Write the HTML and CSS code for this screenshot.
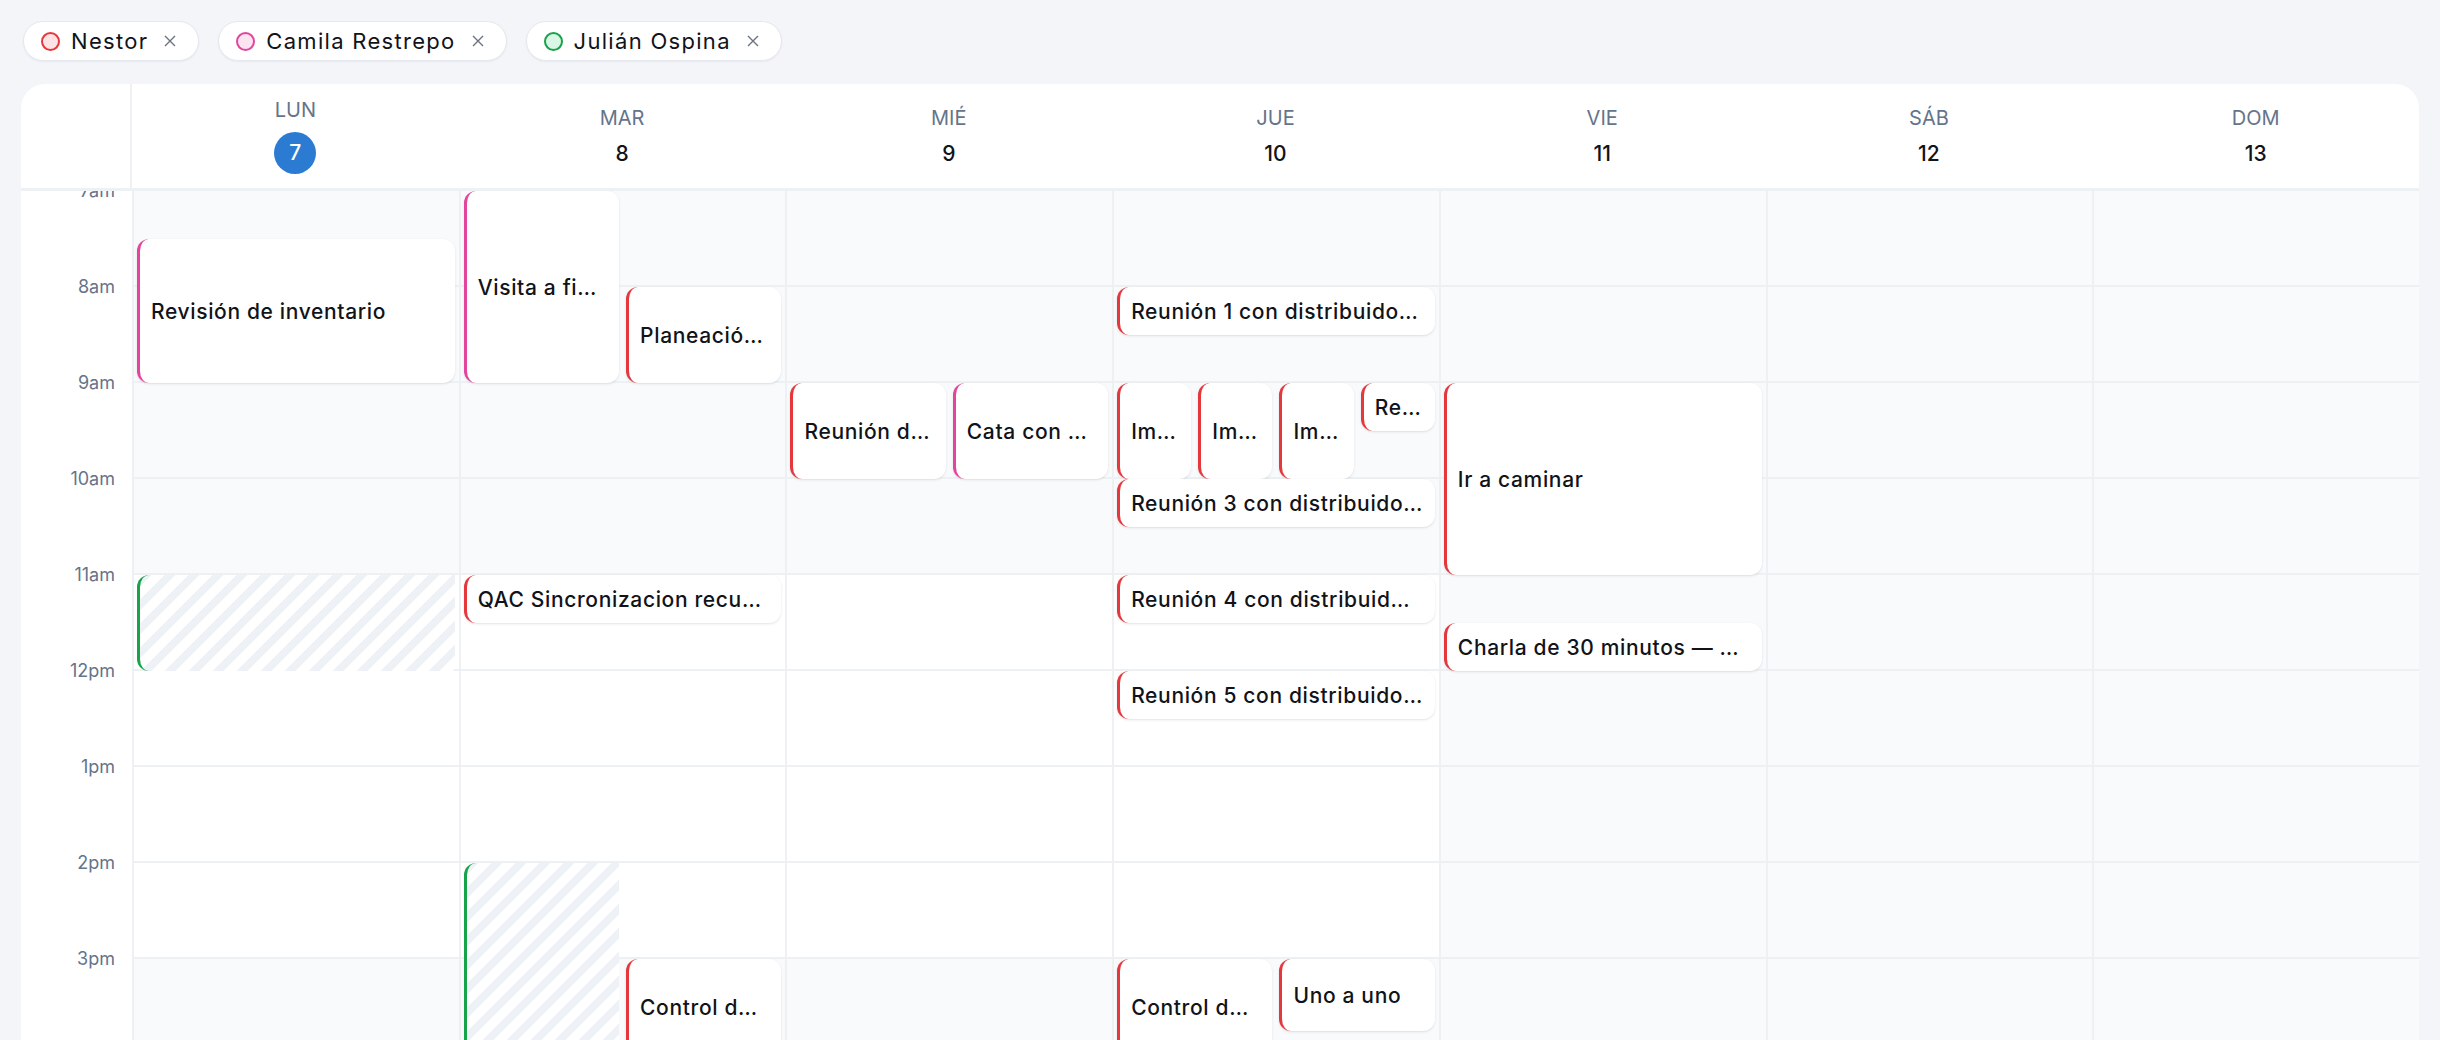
FILE: index.html
```html
<!DOCTYPE html>
<html lang="es">
<head>
    <meta charset="UTF-8">
    <meta name="viewport" content="width=device-width, initial-scale=1.0">
    <title>Calendario semanal</title>
    <link rel="stylesheet" href="styles.css">
</head>
<body>
<div class="page">

    <!-- People whose agendas are overlaid -->
    <div class="chips">
        <span class="chip">
            <span class="dot red"></span>
            <span class="chip-name">Nestor</span>
            <svg class="chip-x" viewBox="0 0 14 14"><path d="M2 2L12 12M12 2L2 12"/></svg>
        </span>
        <span class="chip">
            <span class="dot pink"></span>
            <span class="chip-name">Camila Restrepo</span>
            <svg class="chip-x" viewBox="0 0 14 14"><path d="M2 2L12 12M12 2L2 12"/></svg>
        </span>
        <span class="chip">
            <span class="dot green"></span>
            <span class="chip-name">Julián Ospina</span>
            <svg class="chip-x" viewBox="0 0 14 14"><path d="M2 2L12 12M12 2L2 12"/></svg>
        </span>
    </div>

    <div class="calendar">
        <div class="cal-head">
            <div class="corner"></div>
            <div class="day-head today"><span class="wd">LUN</span><span class="num">7</span></div>
            <div class="day-head"><span class="wd">MAR</span><span class="num">8</span></div>
            <div class="day-head"><span class="wd">MIÉ</span><span class="num">9</span></div>
            <div class="day-head"><span class="wd">JUE</span><span class="num">10</span></div>
            <div class="day-head"><span class="wd">VIE</span><span class="num">11</span></div>
            <div class="day-head"><span class="wd">SÁB</span><span class="num">12</span></div>
            <div class="day-head"><span class="wd">DOM</span><span class="num">13</span></div>
        </div>

        <div class="cal-body">
            <div class="gutter">
                <div class="hour"><span>7am</span></div>
                <div class="hour"><span>8am</span></div>
                <div class="hour"><span>9am</span></div>
                <div class="hour"><span>10am</span></div>
                <div class="hour"><span>11am</span></div>
                <div class="hour"><span>12pm</span></div>
                <div class="hour"><span>1pm</span></div>
                <div class="hour"><span>2pm</span></div>
                <div class="hour"><span>3pm</span></div>
            </div>

            <!-- Lunes -->
            <div class="day">
                <div class="slot"></div><div class="slot"></div><div class="slot"></div><div class="slot"></div>
                <div class="slot open"></div><div class="slot open"></div><div class="slot open"></div><div class="slot open"></div>
                <div class="slot"></div>
                <div class="event pink" style="--start:0.5;--len:1.5;--lane:0;--lanes:1"><span>Revisión de inventario</span></div>
                <div class="busy" style="--start:4;--len:1;--lane:0;--lanes:1"></div>
            </div>

            <!-- Martes -->
            <div class="day">
                <div class="slot"></div><div class="slot"></div><div class="slot"></div><div class="slot"></div>
                <div class="slot open"></div><div class="slot open"></div><div class="slot open"></div><div class="slot open"></div>
                <div class="slot"></div>
                <div class="event pink" style="--start:0;--len:2;--lane:0;--lanes:2"><span>Visita a finca</span></div>
                <div class="event red" style="--start:1;--len:1;--lane:1;--lanes:2"><span>Planeación semanal</span></div>
                <div class="event red" style="--start:4;--len:0.5;--lane:0;--lanes:1"><span>QAC Sincronizacion recurrente</span></div>
                <div class="busy" style="--start:7;--len:2;--lane:0;--lanes:2"></div>
                <div class="event red" style="--start:8;--len:1;--lane:1;--lanes:2"><span>Control de calidad</span></div>
            </div>

            <!-- Miércoles -->
            <div class="day">
                <div class="slot"></div><div class="slot"></div><div class="slot"></div><div class="slot"></div>
                <div class="slot open"></div><div class="slot open"></div><div class="slot open"></div><div class="slot open"></div>
                <div class="slot"></div>
                <div class="event red" style="--start:2;--len:1;--lane:0;--lanes:2"><span>Reunión de equipo</span></div>
                <div class="event pink" style="--start:2;--len:1;--lane:1;--lanes:2"><span>Cata con clientes</span></div>
            </div>

            <!-- Jueves -->
            <div class="day">
                <div class="slot"></div><div class="slot"></div><div class="slot"></div><div class="slot"></div>
                <div class="slot open"></div><div class="slot open"></div><div class="slot open"></div><div class="slot open"></div>
                <div class="slot"></div>
                <div class="event red" style="--start:1;--len:0.5;--lane:0;--lanes:1"><span>Reunión 1 con distribuidores</span></div>
                <div class="event red" style="--start:2;--len:1;--lane:0;--lanes:4"><span>Importación</span></div>
                <div class="event red" style="--start:2;--len:1;--lane:1;--lanes:4"><span>Importación</span></div>
                <div class="event red" style="--start:2;--len:1;--lane:2;--lanes:4"><span>Importación</span></div>
                <div class="event red" style="--start:2;--len:0.5;--lane:3;--lanes:4"><span>Reunión 2</span></div>
                <div class="event red" style="--start:3;--len:0.5;--lane:0;--lanes:1"><span>Reunión 3 con distribuidores</span></div>
                <div class="event red" style="--start:4;--len:0.5;--lane:0;--lanes:1"><span>Reunión 4 con distribuidores</span></div>
                <div class="event red" style="--start:5;--len:0.5;--lane:0;--lanes:1"><span>Reunión 5 con distribuidores</span></div>
                <div class="event red" style="--start:8;--len:1;--lane:0;--lanes:2"><span>Control de calidad</span></div>
                <div class="event red" style="--start:8;--len:0.75;--lane:1;--lanes:2"><span>Uno a uno</span></div>
            </div>

            <!-- Viernes -->
            <div class="day">
                <div class="slot"></div><div class="slot"></div><div class="slot"></div><div class="slot"></div>
                <div class="slot"></div><div class="slot"></div><div class="slot"></div><div class="slot"></div>
                <div class="slot"></div>
                <div class="event red" style="--start:2;--len:2;--lane:0;--lanes:1"><span>Ir a caminar</span></div>
                <div class="event red" style="--start:4.5;--len:0.5;--lane:0;--lanes:1"><span>Charla de 30 minutos — Equipo</span></div>
            </div>

            <!-- Sábado -->
            <div class="day">
                <div class="slot"></div><div class="slot"></div><div class="slot"></div><div class="slot"></div>
                <div class="slot"></div><div class="slot"></div><div class="slot"></div><div class="slot"></div>
                <div class="slot"></div>
            </div>

            <!-- Domingo -->
            <div class="day">
                <div class="slot"></div><div class="slot"></div><div class="slot"></div><div class="slot"></div>
                <div class="slot"></div><div class="slot"></div><div class="slot"></div><div class="slot"></div>
                <div class="slot"></div>
            </div>
        </div>
    </div>
</div>
</body>
</html>
```

FILE: styles.css
```css
:root {
    --hour: 96px;
    --line: #eef1f4;
    --muted: #64748b;
    --ink: #111318;
    --red: #e5383d;
    --pink: #e3459d;
    --green: #16a34a;
}

html,
body {
    height: 100%;
    overflow: hidden;
}

body {
    margin: 0;
    background-color: #f4f5f8;
    font-family: "Inter", "Noto Sans", sans-serif;
    color: var(--ink);
}

.page {
    padding: 21px 21px 0 21px;
}

/* Person filter chips */
.chips {
    display: flex;
    gap: 19px;
    padding-left: 2px;
    margin-bottom: 23px;
}

.chip {
    display: inline-flex;
    align-items: center;
    height: 40px;
    box-sizing: border-box;
    padding: 0 21px 0 17px;
    background-color: #ffffff;
    border: 1px solid #e5e8ee;
    border-radius: 20px;
    box-shadow: 0 1px 2px rgba(15, 23, 42, 0.05);
}

.dot {
    width: 19px;
    height: 19px;
    box-sizing: border-box;
    border-radius: 50%;
    border: 2px solid;
    margin-right: 11px;
}

.dot.red { border-color: var(--red); background-color: #fde3e4; }
.dot.pink { border-color: var(--pink); background-color: #fce4f1; }
.dot.green { border-color: var(--green); background-color: #dcf6e5; }

.chip-name {
    font-size: 22px;
    letter-spacing: 1.3px;
}

.chip-x {
    width: 14px;
    height: 14px;
    margin-left: 15px;
    fill: none;
    stroke: #6b7280;
    stroke-width: 1.4;
}

/* Week grid */
.calendar {
    background-color: #ffffff;
    border-radius: 24px 24px 0 0;
    overflow: hidden;
}

.cal-head {
    display: grid;
    grid-template-columns: 111px repeat(7, 1fr);
    height: 104px;
    border-bottom: 3px solid var(--line);
}

.corner {
    border-right: 2px solid var(--line);
}

.day-head {
    display: flex;
    flex-direction: column;
    align-items: center;
    justify-content: center;
    gap: 10px;
}

.wd {
    font-size: 20px;
    line-height: 24px;
    color: var(--muted);
}

.num {
    font-size: 21px;
    font-weight: 500;
    line-height: 27px;
}

.today .num {
    width: 42px;
    height: 42px;
    line-height: 42px;
    text-align: center;
    border-radius: 50%;
    background-color: #2b7bd3;
    color: #ffffff;
}

.cal-body {
    display: grid;
    grid-template-columns: 111px repeat(7, 1fr);
    height: 849px;
    overflow: hidden;
}

.gutter {
    background-color: #ffffff;
}

.hour {
    height: var(--hour);
    text-align: right;
    padding-right: 17px;
}

.hour span {
    display: inline-block;
    font-size: 18px;
    line-height: 22px;
    color: var(--muted);
    transform: translateY(-50%);
}

.day {
    position: relative;
    border-left: 2px solid var(--line);
}

.slot {
    height: var(--hour);
    box-sizing: border-box;
    border-bottom: 2px solid var(--line);
    background-color: #f8fafc;
}

.slot.open {
    background-color: #ffffff;
}

/* Events sit on the day column by start time and lane */
.event,
.busy {
    position: absolute;
    top: calc(var(--start) * var(--hour));
    height: calc(var(--len) * var(--hour));
    left: calc(100% * var(--lane) / var(--lanes) + 3px);
    width: calc(100% / var(--lanes) - 7px);
    box-sizing: border-box;
}

.event {
    display: flex;
    align-items: center;
    padding: 0 12px 0 11px;
    background-color: #ffffff;
    border-left: 3px solid var(--red);
    border-radius: 12px;
    box-shadow: 0 1px 3px rgba(15, 23, 42, 0.09), 0 1px 1px rgba(15, 23, 42, 0.03);
}

.event span {
    overflow: hidden;
    white-space: nowrap;
    text-overflow: ellipsis;
    font-size: 21px;
    font-weight: 500;
    letter-spacing: 0.65px;
}

.event.red { border-left-color: var(--red); }
.event.pink { border-left-color: var(--pink); }

/* Blocked time from another calendar */
.busy {
    border-left: 3px solid var(--green);
    border-radius: 12px 0 0 12px;
    background: repeating-linear-gradient(135deg, #eef1f5 0 8px, #ffffff 8px 17px);
}
```
